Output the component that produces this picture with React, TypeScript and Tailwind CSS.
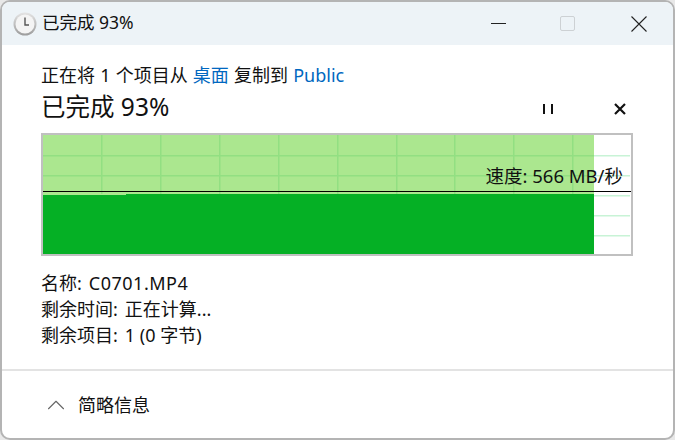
import { ChevronUp } from "lucide-react";

const FONT = "font-['Noto_Sans','Noto_Sans_CJK_SC',sans-serif]";

// Vertical grid lines of the speed chart
const GRID_X = [58, 117, 176, 235, 294, 353, 411, 470, 529];
const GRID_Y = [20, 40, 60, 80, 100];

function SpeedChart() {
  return (
    <div className="relative h-[123px] w-[592px] border-2 border-[#c0c0c0] bg-white">
      <svg width="588" height="119" className="block">
        {GRID_Y.map((y) => (
          <rect key={y} x="0" y={y} width="587" height="1.5" fill="#c8f3d6" />
        ))}
        <rect x="0" y="0" width="551" height="119" fill="#abe78f" />
        {GRID_X.map((x) => (
          <rect key={x} x={x} y="0" width="1.5" height="59" fill="#92df82" />
        ))}
        {GRID_Y.slice(0, 2).map((y) => (
          <rect key={y} x="0" y={y} width="551" height="1.5" fill="#92df82" />
        ))}
        <path d="M0 60 H83 V59 H551 V119 H0 Z" fill="#05b025" />
        <rect x="0" y="56" width="588" height="1" fill="#000000" />
      </svg>
      <span className="absolute right-[8px] top-[28px] text-[18.5px] leading-[26px] text-[#111]">速度: 566 MB/秒</span>
    </div>
  );
}

function ClockIcon() {
  return (
    <svg width="24" height="24" viewBox="0 0 24 24">
      <defs>
        <linearGradient id="rim" x1="0" y1="0" x2="0" y2="1">
          <stop offset="0" stopColor="#e4e4e4" />
          <stop offset="1" stopColor="#9c9c9c" />
        </linearGradient>
      </defs>
      <circle cx="12" cy="12" r="11.5" fill="url(#rim)" />
      <circle cx="12" cy="12" r="9.5" fill="#f4f4f4" />
      <path d="M12 5.5V13H16" fill="none" stroke="#555" strokeWidth="1.4" />
    </svg>
  );
}

export default function App() {
  return (
    <div className={`${FONT} h-[440px] w-[675px] bg-[#e8e8e8] text-[#111]`}>
      <div className="flex h-[440px] w-[675px] flex-col overflow-hidden rounded-[10px] border-2 border-[#b4b4b4] bg-white">
        {/* Title bar */}
        <div className="flex h-[43px] shrink-0 items-center bg-[#edf3f7] pl-[11px]">
          <ClockIcon />
          <span className="ml-[5px] -mt-[3px] text-[17.5px] leading-6">已完成 93%</span>
          <div className="ml-auto flex items-center">
            <svg width="16" height="16" viewBox="0 0 16 16" className="mr-[53px]">
              <rect x="0" y="7" width="15" height="1" fill="#222" />
            </svg>
            <div className="mr-[56px] h-[15px] w-[15px] rounded-[2px] border border-[#cdd1d4]" />
            <svg width="16" height="16" viewBox="0 0 16 16" className="mr-[26px]">
              <path d="M0.5 0.5L15.5 15.5M15.5 0.5L0.5 15.5" stroke="#222" strokeWidth="1.1" fill="none" />
            </svg>
          </div>
        </div>

        {/* Content */}
        <div className="flex flex-1 flex-col pl-[39px] pr-[40px]">
          <div className="mt-[17px] text-[18px] leading-[27px] [word-spacing:0.5px]">
            正在将 1 个项目从 <span className="text-[#0067c0]">桌面</span> 复制到{" "}
            <span className="text-[#0067c0]">Public</span>
          </div>
          <div className="flex h-[35px] items-center">
            <span className="text-[24.5px] leading-[35px]">已完成 93%</span>
            <svg width="12" height="12" viewBox="0 0 12 12" className="ml-auto mr-[60px] mt-[4px]">
              <rect x="2" y="1" width="2" height="10" fill="#111" />
              <rect x="10" y="1" width="2" height="10" fill="#111" />
            </svg>
            <svg width="14" height="14" viewBox="0 0 14 14" className="mr-[6px] mt-[4px]">
              <path d="M2 2L12 12M12 2L2 12" stroke="#111" strokeWidth="2.2" fill="none" />
            </svg>
          </div>
          <div className="mt-[9px]">
            <SpeedChart />
          </div>
          <div className="mt-[14px] grid grid-cols-[max-content_1fr] gap-x-[7px] text-[18px] leading-[26px]">
            <div className="col-span-2 flex gap-[7px]">
              <span>名称:</span>
              <span className="tracking-[0.5px]">C0701.MP4</span>
            </div>
            <span>剩余时间:</span>
            <span>正在计算...</span>
            <span>剩余项目:</span>
            <span>1 (0 字节)</span>
          </div>
        </div>

        {/* Footer */}
        <div className="flex h-[69px] shrink-0 items-center border-t-2 border-[#e3e3e3] pl-[39px]">
          <ChevronUp size={30} strokeWidth={0.9} className="text-[#666]" />
          <span className="ml-[7px] mt-[2px] text-[18px]">简略信息</span>
        </div>
      </div>
    </div>
  );
}
